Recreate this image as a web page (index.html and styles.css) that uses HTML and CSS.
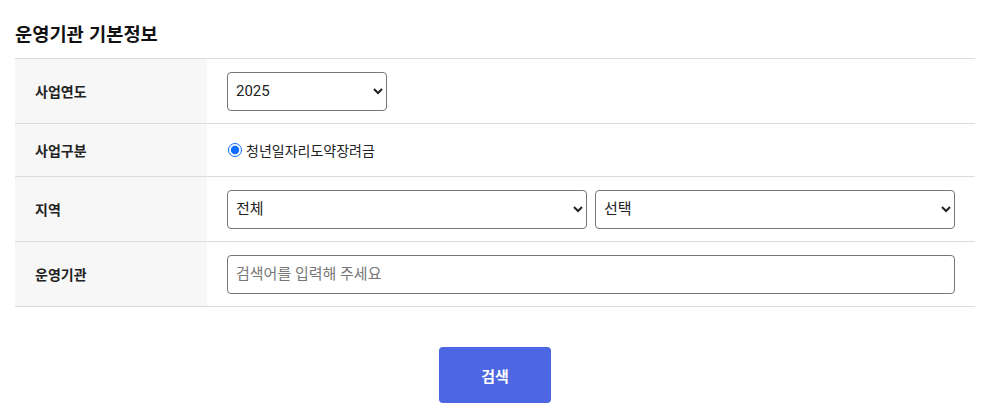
FILE: index.html
```html
<!DOCTYPE html>
<html lang="ko">
<head>
<meta charset="utf-8">
<title>운영기관 기본정보</title>
<link rel="stylesheet" href="styles.css">
</head>
<body>
<div class="wrap">
  <h2 class="title">운영기관 기본정보</h2>
  <table class="form-table">
    <tr class="row-tall">
      <th>사업연도</th>
      <td>
        <select class="sel sel-year"><option>2025</option></select>
      </td>
    </tr>
    <tr class="row-short">
      <th>사업구분</th>
      <td>
        <label class="radio"><input type="radio" name="biz" checked><span>청년일자리도약장려금</span></label>
      </td>
    </tr>
    <tr class="row-tall">
      <th>지역</th>
      <td>
        <div class="pair">
          <select class="sel"><option>전체</option></select>
          <select class="sel"><option>선택</option></select>
        </div>
      </td>
    </tr>
    <tr class="row-tall">
      <th>운영기관</th>
      <td>
        <input class="text" type="text" placeholder="검색어를 입력해 주세요">
      </td>
    </tr>
  </table>
  <div class="actions">
    <button class="btn" type="button">검색</button>
  </div>
</div>
</body>
</html>
```
FILE: styles.css
```css
* { box-sizing: border-box; }
body {
  margin: 0;
  font-family: Roboto, "Noto Sans CJK KR", sans-serif;
  color: #222;
  background: #fff;
}
.wrap {
  padding: 20px 30px 0 15px;
}
.title {
  margin: 0 0 12px 0;
  font-size: 18.7px;
  font-weight: 700;
  line-height: 26px;
  color: #111;
  font-family: "Noto Sans CJK KR", sans-serif;
}
.form-table {
  width: 960px;
  border-collapse: collapse;
  border-top: 1px solid #dcdcdc;
}
.form-table tr { border-bottom: 1px solid #dcdcdc; }
.row-tall { height: 65px; }
.row-short { height: 53px; }
.form-table th {
  width: 192px;
  background: #f7f7f7;
  text-align: left;
  padding: 0 0 0 20px;
  font-size: 14px;
  font-weight: 700;
  color: #222;
}
.form-table td {
  padding: 0 20px;
  font-size: 14px;
}
.sel {
  height: 39px;
  font-family: Roboto, "Noto Sans CJK KR", sans-serif;
  font-size: 15px;
  color: #222;
  border: 1px solid #767676;
  border-radius: 4px;
  background: #fff;
  padding: 0 4px;
  display: block;
}
.sel-year { width: 160px; }
.pair {
  display: flex;
  gap: 8px;
}
.pair .sel { flex: 1; width: 360px; }
.radio {
  display: flex;
  align-items: center;
  gap: 4px;
  font-size: 14px;
  color: #222;
}
.radio input {
  margin: 0 0 0 1px;
  width: 14px;
  height: 14px;
  accent-color: #0b6cff;
}
.text {
  width: 728px;
  height: 39px;
  border: 1px solid #767676;
  border-radius: 4px;
  padding: 0 8px;
  font-family: Roboto, "Noto Sans CJK KR", sans-serif;
  font-size: 15px;
  display: block;
}
.text::placeholder { color: #777; }
.actions {
  display: flex;
  justify-content: center;
  width: 960px;
  padding-top: 40px;
}
.btn {
  width: 112px;
  height: 56px;
  border: 0;
  border-radius: 4px;
  background: #4d66e1;
  color: #fff;
  font-family: "Noto Sans CJK KR", sans-serif;
  font-size: 15px;
  font-weight: 700;
}
```
